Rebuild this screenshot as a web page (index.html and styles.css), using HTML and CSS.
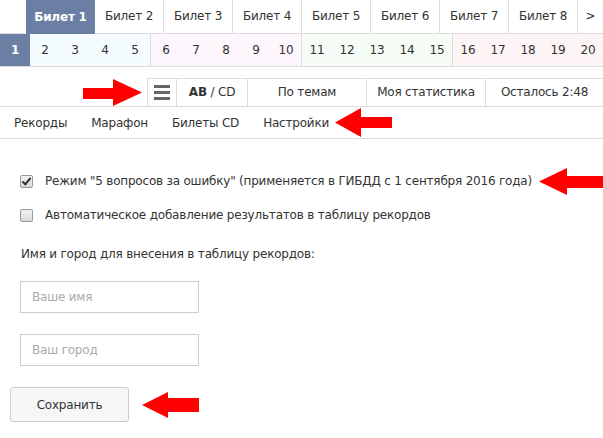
FILE: index.html
```html
<!DOCTYPE html>
<html lang="ru">
<head>
  <meta charset="UTF-8">
  <meta name="viewport" content="width=device-width, initial-scale=1.0">
  <title>Настройки</title>
  <link rel="stylesheet" href="styles.css">
</head>
<body>

<div class="tickets">
  <a class="ticket active">Билет 1</a>
  <a class="ticket">Билет 2</a>
  <a class="ticket">Билет 3</a>
  <a class="ticket">Билет 4</a>
  <a class="ticket">Билет 5</a>
  <a class="ticket">Билет 6</a>
  <a class="ticket">Билет 7</a>
  <a class="ticket">Билет 8</a>
  <a class="ticket next">&gt;</a>
</div>

<div class="questions">
  <div class="group g1">
    <span class="current">1</span><span>2</span><span>3</span><span>4</span><span>5</span>
  </div>
  <div class="group g2">
    <span>6</span><span>7</span><span>8</span><span>9</span><span>10</span>
  </div>
  <div class="group g3">
    <span>11</span><span>12</span><span>13</span><span>14</span><span>15</span>
  </div>
  <div class="group g4">
    <span>16</span><span>17</span><span>18</span><span>19</span><span>20</span>
  </div>
</div>

<div class="toolbar">
  <svg class="arrow arrow-menu" width="59" height="27" viewBox="0 0 59 27">
    <polygon points="0,9 30,9 30,0 59,13.5 30,27 30,20 0,20" />
  </svg>
  <div class="tools">
    <span class="tool menu"><i></i><i></i><i></i></span>
    <span class="tool cat"><b>AB</b> / CD</span>
    <span class="tool wide">По темам</span>
    <span class="tool wide">Моя статистика</span>
    <span class="tool wide last">Осталось 2:48</span>
  </div>
</div>

<div class="submenu">
  <a>Рекорды</a>
  <a>Марафон</a>
  <a>Билеты CD</a>
  <a>Настройки</a>
  <svg class="arrow arrow-tab" width="57" height="29" viewBox="0 0 57 29">
    <polygon points="0,14.5 26,0 26,9 57,9 57,20 26,20 26,29" />
  </svg>
</div>

<form class="settings">
  <div class="option">
    <label><input type="checkbox" checked> Режим "5 вопросов за ошибку" (применяется в ГИБДД с 1 сентября 2016 года)</label>
    <svg class="arrow arrow-mode" width="64" height="27" viewBox="0 0 64 27">
      <polygon points="0,13.5 28,0 28,8 64,8 64,20 28,20 28,27" />
    </svg>
  </div>
  <div class="option">
    <label><input type="checkbox"> Автоматическое добавление результатов в таблицу рекордов</label>
  </div>

  <p class="hint">Имя и город для внесения в таблицу рекордов:</p>

  <input class="field" type="text" placeholder="Ваше имя">
  <input class="field" type="text" placeholder="Ваш город">

  <div class="actions">
    <button type="button" class="save">Сохранить</button>
    <svg class="arrow arrow-save" width="57" height="26" viewBox="0 0 57 26">
      <polygon points="0,13 26,0 26,6 57,6 57,20 26,20 26,26" />
    </svg>
  </div>
</form>

</body>
</html>
```

FILE: styles.css
```css
body {
  margin: 0;
  background: #fff;
  color: #333;
  font-family: "DejaVu Sans", Verdana, sans-serif;
  font-size: 12px;
  letter-spacing: -0.2px;
  overflow: hidden;
}

a {
  color: #333;
  text-decoration: none;
}

.arrow polygon {
  fill: #ff0000;
}

/* билеты */
.tickets {
  display: flex;
  height: 33px;
  padding-left: 26px;
  border-bottom: 1px solid #ddd;
}

.ticket {
  flex: none;
  width: 69px;
  box-sizing: border-box;
  border-right: 1px solid #ddd;
  line-height: 33px;
  text-align: center;
}

.ticket.active {
  background: #6a7fa3;
  color: #fff;
  font-weight: bold;
  border-right: none;
  margin-bottom: -1px;
  line-height: 34px;
}

.ticket.next {
  flex: 1;
  border-right: none;
}

/* вопросы */
.questions {
  display: flex;
  height: 32px;
  border-bottom: 1px solid #ddd;
}

.group {
  flex: 1;
  display: flex;
  border-right: 1px solid #ddd;
}

.group:last-child { border-right: none; }

.g1 { background: #f5fcfe; }
.g2 { background: #fdf6fd; }
.g3 { background: #f5fdf6; }
.g4 { background: #fdf5f5; }

.group span {
  flex: 1;
  line-height: 32px;
  text-align: center;
}

.group .current {
  background: #6a7fa3;
  color: #fff;
  font-weight: bold;
}

/* панель */
.toolbar {
  display: flex;
  justify-content: flex-end;
  align-items: center;
  margin-top: 11px;
  border-bottom: 1px solid #ddd;
}

.arrow-menu {
  margin-right: 5px;
}

.tools {
  display: flex;
}

.tool {
  box-sizing: border-box;
  height: 28px;
  line-height: 27px;
  border-top: 1px solid #ddd;
  border-left: 1px solid #ddd;
  text-align: center;
}

.tool.menu {
  width: 29px;
  display: flex;
  flex-direction: column;
  justify-content: center;
  align-items: center;
  gap: 3px;
}

.tool.menu i {
  display: block;
  width: 16px;
  height: 3px;
  background: #666;
}

.tool.cat { width: 71px; }
.tool.cat b { color: #333; }
.tool.wide { width: 119px; }
.tool.last { width: 118px; }

/* подменю */
.submenu {
  display: flex;
  align-items: center;
  height: 31px;
  padding-left: 2px;
  border-bottom: 1px solid #ddd;
}

.submenu a {
  padding: 0 12px;
}

.arrow-tab {
  margin-left: -6px;
}

/* настройки */
.settings {
  padding: 32px 0 0 20px;
}

.option {
  display: flex;
  align-items: center;
  height: 20px;
  margin-bottom: 14px;
}

.option label {
  display: flex;
  align-items: center;
  white-space: nowrap;
}

.option input {
  appearance: none;
  -webkit-appearance: none;
  position: relative;
  width: 13px;
  height: 13px;
  margin: 0 12px 0 0;
  border: 1px solid #9a9a9a;
  border-radius: 2px;
  background: linear-gradient(#f4f4f4, #d8d8d8);
}

.option input:checked::after {
  content: "";
  position: absolute;
  left: 3px;
  top: 0;
  width: 3px;
  height: 7px;
  border: solid #333;
  border-width: 0 2px 2px 0;
  transform: rotate(40deg);
}

.arrow-mode {
  margin-left: 7px;
  flex: none;
}

.hint {
  margin: 21px 0 19px 1px;
  line-height: 16px;
}

.field {
  display: block;
  box-sizing: border-box;
  width: 179px;
  height: 32px;
  margin: 0 0 21px;
  padding: 0 11px;
  border: 1px solid #ccc;
  border-radius: 0;
  font-family: inherit;
  font-size: 12px;
  letter-spacing: inherit;
  color: #333;
}

.field::placeholder {
  color: #aaa;
}

.actions {
  display: flex;
  align-items: center;
  margin-left: -10px;
}

.save {
  width: 119px;
  height: 35px;
  border: 1px solid #ccc;
  border-radius: 3px;
  background: #f6f6f6;
  color: #333;
  font-family: inherit;
  font-size: 12px;
  letter-spacing: inherit;
  cursor: pointer;
}

.arrow-save {
  margin-left: 13px;
}
```
